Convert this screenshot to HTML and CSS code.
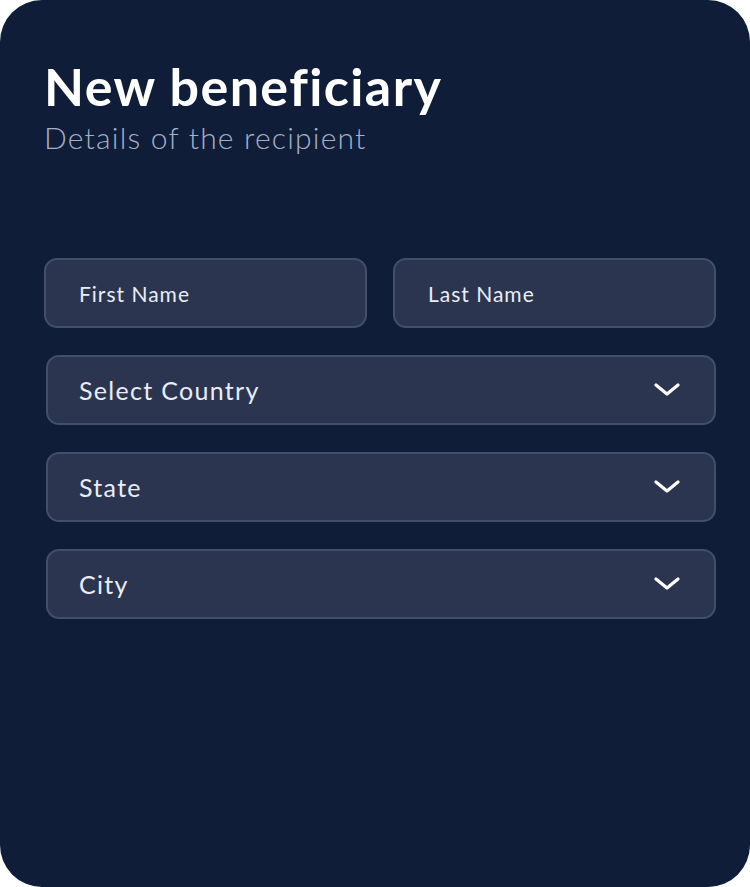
FILE: index.html
```html
<!DOCTYPE html>
<html lang="en">
<head>
  <meta charset="UTF-8">
  <title>New beneficiary</title>
  <link rel="stylesheet" href="styles.css">
</head>
<body>
  <div class="card">
    <h1 class="title">New beneficiary</h1>
    <p class="subtitle">Details of the recipient</p>

    <form class="form">
      <div class="row">
        <div class="field small">First Name</div>
        <div class="field small">Last Name</div>
      </div>
      <div class="field select">
        <span>Select Country</span>
        <svg class="chevron" width="26" height="14" viewBox="0 0 26 14"><path d="M2 2 L13 11 L24 2" fill="none" stroke="#ffffff" stroke-width="3.2" stroke-linecap="round" stroke-linejoin="round"/></svg>
      </div>
      <div class="field select">
        <span>State</span>
        <svg class="chevron" width="26" height="14" viewBox="0 0 26 14"><path d="M2 2 L13 11 L24 2" fill="none" stroke="#ffffff" stroke-width="3.2" stroke-linecap="round" stroke-linejoin="round"/></svg>
      </div>
      <div class="field select">
        <span>City</span>
        <svg class="chevron" width="26" height="14" viewBox="0 0 26 14"><path d="M2 2 L13 11 L24 2" fill="none" stroke="#ffffff" stroke-width="3.2" stroke-linecap="round" stroke-linejoin="round"/></svg>
      </div>
    </form>
  </div>
</body>
</html>
```

FILE: styles.css
```css
html, body {
  margin: 0;
  background: #ffffff;
}
body {
  font-family: Lato, "Noto Sans", Arial, sans-serif;
}
.card {
  box-sizing: border-box;
  width: 750px;
  height: 887px;
  background: #0f1d38;
  border-radius: 42px;
  padding: 55px 34px 0 44px;
}
.title {
  margin: 0;
  color: #ffffff;
  font-size: 52px;
  font-weight: 700;
  line-height: 62px;
  letter-spacing: 1.4px;
}
.subtitle {
  margin: 2px 0 0;
  color: #a6b0c5;
  font-size: 30px;
  font-weight: 300;
  line-height: 36px;
  letter-spacing: 1.2px;
}
.form {
  margin-top: 103px;
  display: flex;
  flex-direction: column;
  gap: 27px;
}
.row {
  display: flex;
  gap: 26px;
}
.field {
  box-sizing: border-box;
  height: 70px;
  background: #2b3550;
  border: 2px solid #434e69;
  border-radius: 13px;
  color: #e9edf5;
  display: flex;
  align-items: center;
  padding: 0 33px;
}
.small {
  flex: 1;
  font-size: 21px;
  letter-spacing: 1px;
}
.select {
  margin-left: 2px;
  justify-content: space-between;
  padding: 0 34px 0 31px;
  font-size: 25px;
  letter-spacing: 1.3px;
}
```
